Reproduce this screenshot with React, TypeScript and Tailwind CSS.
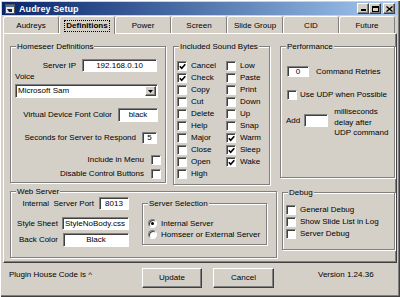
import React from "react";

const sunken =
  "bg-white border border-t-[#808080] border-l-[#808080] border-b-white border-r-white shadow-[inset_1px_1px_0_#404040]";
const raised =
  "bg-[#d4d0c8] border border-t-white border-l-white border-b-[#404040] border-r-[#404040] shadow-[inset_-1px_-1px_0_#808080]";

function Group({
  label,
  className = "",
  children,
}: {
  label: string;
  className?: string;
  children?: React.ReactNode;
}) {
  return (
    <div
      className={`relative shrink-0 border border-[#808080] shadow-[inset_1px_1px_0_#fff,1px_1px_0_#fff] ${className}`}
    >
      <span className="absolute left-[5px] top-[-6px] bg-[#d4d0c8] px-[1px] leading-[11px] whitespace-nowrap">
        {label}
      </span>
      {children}
    </div>
  );
}

function Box({ checked = false }: { checked?: boolean }) {
  return (
    <div className={`w-[10px] h-[10px] shrink-0 flex items-center justify-center ${sunken}`}>
      {checked && (
        <svg width="7" height="7" viewBox="0 0 7 7">
          <path d="M0.8 3.2 L2.7 5.2 L6.3 1.2" fill="none" stroke="#000" strokeWidth="1.6" />
        </svg>
      )}
    </div>
  );
}

function Radio({ on = false }: { on?: boolean }) {
  return (
    <div className="w-[9px] h-[9px] shrink-0 rounded-full bg-white border border-t-[#808080] border-l-[#808080] border-b-white border-r-white shadow-[inset_1px_1px_0_#404040] flex items-center justify-center">
      {on && <div className="w-[3px] h-[3px] rounded-full bg-black" />}
    </div>
  );
}

function Field({ value = "", className = "", align = "center" }: { value?: string; className?: string; align?: "center" | "left" }) {
  return (
    <div
      className={`shrink-0 flex items-center overflow-hidden whitespace-nowrap ${
        align === "center" ? "justify-center" : "justify-start pl-[2px]"
      } ${sunken} ${className}`}
    >
      {value}
    </div>
  );
}

function CheckRow({ label, checked }: { label: string; checked?: boolean }) {
  return (
    <div className="h-[12px] flex items-center gap-[4px]">
      <Box checked={checked} />
      <span className="whitespace-nowrap">{label}</span>
    </div>
  );
}

function Tab({ label, active = false }: { label: string; active?: boolean }) {
  return (
    <div
      className={`relative w-[56px] shrink-0 flex items-center justify-center rounded-t-[3px] border-t border-l border-t-white border-l-white border-r border-r-[#808080] ${
        active ? "h-[18px] z-10 bg-[#d4d0c8] font-bold" : "h-[17px] pt-[1px]"
      }`}
    >
      {active ? (
        <span className="border border-dotted border-black px-[1px] leading-[10px]">{label}</span>
      ) : (
        <span>{label}</span>
      )}
    </div>
  );
}

const left1 = ["Cancel", "Check", "Copy", "Cut", "Delete", "Help", "Major", "Close", "Open", "High"];
const left1Checked = ["Cancel", "Check"];
const right1 = ["Low", "Paste", "Print", "Down", "Up", "Snap", "Warm", "Sleep", "Wake"];
const right1Checked = ["Warm", "Sleep", "Wake"];

export default function App() {
  return (
    <div className="w-[400px] h-[297px] overflow-hidden bg-[#d4d0c8] text-black text-[8px] leading-[10px] font-['Liberation_Sans',Arial,sans-serif] shadow-[inset_1px_1px_0_#fff,inset_-1px_-1px_0_#404040,inset_-2px_-2px_0_#808080]">
      {/* title bar */}
      <div className="mx-[2px] pt-[2px]">
        <div className="h-[13px] flex items-center bg-gradient-to-r from-[#0a246a] to-[#a6caf0] pl-[3px] pr-[3px]">
          <svg width="10" height="10" viewBox="0 0 10 10" className="shrink-0">
            <rect x="0.5" y="0.5" width="9" height="9" fill="#e8e8e8" stroke="#555" />
            <rect x="1" y="1" width="8" height="2" fill="#4a6fb0" />
            <path d="M2 5 H7 V8 H4 Z" fill="#222" />
          </svg>
          <span className="ml-[4px] text-white font-bold text-[9px] tracking-[0.1px]">Audrey Setup</span>
          <div className="flex-1" />
          <div className={`w-[12px] h-[11px] flex items-end justify-center pb-[2px] ${raised}`}>
            <div className="w-[5px] h-[2px] bg-black" />
          </div>
          <div className={`w-[12px] h-[11px] flex items-center justify-center ${raised}`}>
            <div className="w-[7px] h-[6px] border border-black border-t-2" />
          </div>
          <div className={`ml-[2px] w-[12px] h-[11px] flex items-center justify-center ${raised}`}>
            <svg width="7" height="6" viewBox="0 0 7 6">
              <path d="M0.5 0.5 L6.5 5.5 M6.5 0.5 L0.5 5.5" stroke="#000" strokeWidth="1.4" />
            </svg>
          </div>
        </div>
      </div>

      {/* tabs */}
      <div className="ml-[3px] mt-[1px] h-[17px] flex items-start">
        <Tab label="Audreys" />
        <Tab label="Definitions" active />
        <Tab label="Power" />
        <Tab label="Screen" />
        <Tab label="Slide Group" />
        <Tab label="CID" />
        <Tab label="Future" />
      </div>

      {/* tab page */}
      <div className="ml-[3px] w-[394px] h-[230px] border border-t-white border-l-white border-r-[#404040] border-b-[#404040] shadow-[inset_-1px_-1px_0_#808080] pl-[6px] pt-[12px] flex items-start">
        <div className="w-[267px] shrink-0 flex flex-col">
          <div className="flex items-start gap-[7px]">
            {/* Homeseer Definitions */}
            <Group label="Homeseer Definitions" className="w-[156px] h-[137px]">
              <div className="flex flex-col pt-[12px]">
                <div className="h-[13px] flex items-center justify-end pr-[8px]">
                  <span>Server IP</span>
                  <Field value="192.168.0.10" className="ml-[6px] w-[75px] h-[13px]" />
                </div>
                <div className="pl-[4px] h-[10px] leading-[10px]">Voice</div>
                <div className={`ml-[4px] mt-[2px] w-[143px] h-[14px] flex items-center ${sunken}`}>
                  <span className="flex-1 pl-[2px]">Microsoft Sam</span>
                  <div className={`w-[11px] h-[10px] mr-[1px] flex items-center justify-center ${raised}`}>
                    <svg width="5" height="3" viewBox="0 0 5 3">
                      <path d="M0 0 H5 L2.5 3 Z" fill="#000" />
                    </svg>
                  </div>
                </div>
                <div className="mt-[10px] h-[14px] flex items-center justify-end pr-[7px]">
                  <span>Virtual Device Font Color</span>
                  <Field value="black" className="ml-[6px] w-[40px] h-[14px]" />
                </div>
                <div className="mt-[10px] h-[12px] flex items-center justify-end pr-[8px]">
                  <span>Seconds for Server to Respond</span>
                  <Field value="5" className="ml-[6px] w-[15px] h-[12px]" />
                </div>
                <div className="mt-[10px] h-[11px] flex items-center justify-end pr-[4px]">
                  <span>Include in Menu</span>
                  <div className="ml-[7px]"><Box /></div>
                </div>
                <div className="mt-[3px] h-[11px] flex items-center justify-end pr-[4px]">
                  <span>Disable Control Buttons</span>
                  <div className="ml-[7px]"><Box /></div>
                </div>
              </div>
            </Group>

            {/* Included Sound Bytes */}
            <Group label="Included Sound Bytes" className="w-[97px] h-[139px]">
              <div className="flex pt-[13px] pl-[3px]">
                <div className="w-[49px] flex flex-col">
                  {left1.map((s) => (
                    <CheckRow key={s} label={s} checked={left1Checked.includes(s)} />
                  ))}
                </div>
                <div className="flex flex-col">
                  {right1.map((s) => (
                    <CheckRow key={s} label={s} checked={right1Checked.includes(s)} />
                  ))}
                </div>
              </div>
            </Group>
          </div>

          {/* Web Server */}
          <Group label="Web Server" className="mt-[6px] w-[267px] h-[67px]">
            <div className="flex items-start">
              <div className="w-[118px] shrink-0 flex flex-col pt-[5px]">
                <div className="h-[13px] flex items-center justify-end">
                  <span className="whitespace-pre">Internal  Server Port</span>
                  <Field value="8013" className="ml-[5px] w-[30px] h-[13px]" />
                </div>
                <div className="mt-[7px] h-[13px] flex items-center justify-end">
                  <span>Style Sheet</span>
                  <Field value="StyleNoBody.css" align="left" className="ml-[4px] w-[67px] h-[13px]" />
                </div>
                <div className="mt-[3px] h-[14px] flex items-center justify-end">
                  <span>Back Color</span>
                  <Field value="Black" className="ml-[5px] w-[66px] h-[14px]" />
                </div>
              </div>
              <Group label="Server Selection" className="ml-[13px] mt-[11px] w-[125px] h-[42px]">
                <div className="flex flex-col pt-[14px] pl-[5px]">
                  <div className="h-[11px] flex items-center gap-[4px]">
                    <Radio on />
                    <span>Internal Server</span>
                  </div>
                  <div className="h-[11px] flex items-center gap-[4px]">
                    <Radio />
                    <span>Homseer or External Server</span>
                  </div>
                </div>
              </Group>
            </div>
          </Group>
        </div>

        <div className="ml-[3px] flex flex-col">
          {/* Performance */}
          <Group label="Performance" className="w-[115px] h-[132px]">
            <div className="flex flex-col pt-[19px] pl-[6px]">
              <div className="h-[11px] flex items-center">
                <Field value="0" className="w-[22px] h-[11px]" />
                <span className="ml-[7px]">Command Retries</span>
              </div>
              <div className="mt-[13px] h-[10px] flex items-center gap-[3px]">
                <Box />
                <span>Use UDP when Possible</span>
              </div>
              <div className="mt-[7px] flex items-start">
                <div className="mt-[7px] flex items-center">
                  <span className="-ml-[1px]">Add</span>
                  <Field className="ml-[4px] w-[24px] h-[13px]" />
                </div>
                <div className="ml-[6px] leading-[10.5px]">
                  milliseconds
                  <br />
                  delay after
                  <br />
                  UDP command
                </div>
              </div>
            </div>
          </Group>

          {/* Debug */}
          <Group label="Debug" className="mt-[14px] ml-[2px] w-[113px] h-[58px]">
            <div className="flex flex-col pt-[11px] pl-[3px]">
              <div className="h-[12px] flex items-center gap-[4px]">
                <Box />
                <span>General Debug</span>
              </div>
              <div className="h-[12px] flex items-center gap-[4px]">
                <Box />
                <span>Show Slide List in Log</span>
              </div>
              <div className="h-[12px] flex items-center gap-[4px]">
                <Box />
                <span>Server Debug</span>
              </div>
            </div>
          </Group>
        </div>
      </div>

      {/* footer */}
      <div className="h-[32px] flex items-start">
        <div className="w-[142px] shrink-0 pl-[9px] pt-[7px]">Plugin House Code is ^</div>
        <button className={`mt-[5px] w-[60px] h-[20px] flex items-center justify-center ${raised}`}>Update</button>
        <button className={`ml-[11px] mt-[5px] w-[61px] h-[20px] flex items-center justify-center ${raised}`}>Cancel</button>
        <div className="ml-[44px] pt-[7px]">Version 1.24.36</div>
      </div>
    </div>
  );
}
